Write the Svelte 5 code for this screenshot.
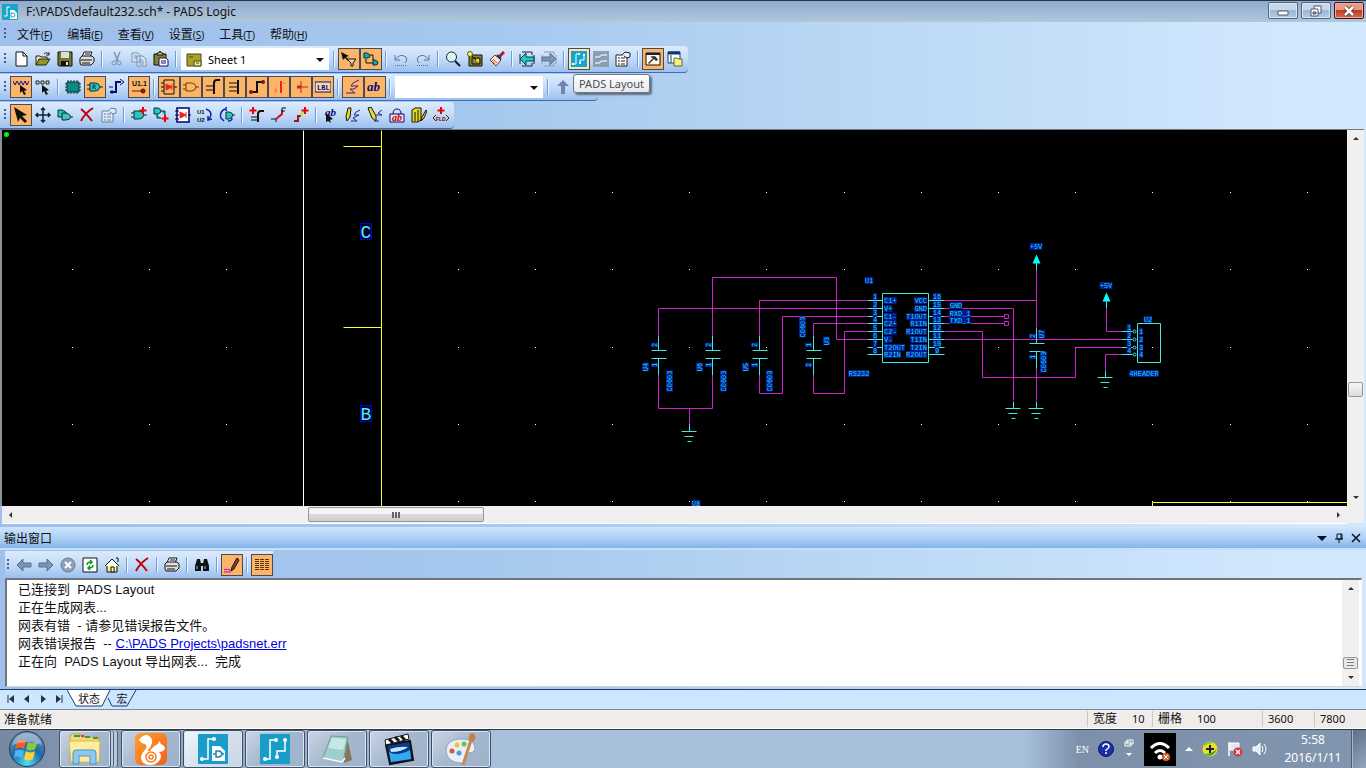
<script lang="ts">
    interface Tool {
        id: string;
        label: string;
        on?: boolean;
        hot?: boolean;
    }

    const menus = [
        { name: '文件', key: 'F' },
        { name: '编辑', key: 'E' },
        { name: '查看', key: 'V' },
        { name: '设置', key: 'S' },
        { name: '工具', key: 'T' },
        { name: '帮助', key: 'H' }
    ];

    // small shapes that several icons share
    const gate = '<path d="M3 4h5q4 0 5 4q-1 4-5 4H3z" fill="#2bc4c4" stroke="#033" /><path d="M0 6h3M0 10h3M13 8h3" stroke="#033"/>';
    const plus = '<path d="M12 0v7M8.500 3.500h7" stroke="#e00" stroke-width="2"/>';
    const printer = '<path d="M5 1h8l-2 5H3z" fill="#fff" stroke="#111"/><path d="M1 7l2-2h10l2 2v4l-3 3H2L1 12z" fill="#ddd" stroke="#111"/><path d="M2 9h11M3 12h8M6 3h5" stroke="#111"/>';
    const cross = '<path d="M2 2q5 4 11 12M14 1Q6 6 2 14" fill="none" stroke="#c00010" stroke-width="2"/>';
    const leftArrow = '<path d="M1 8l6-6v4h8v4H7v4z"';
    const rightArrow = '<path d="M15 8L9 2v4H1v4h8v4z"';

    const icons: Record<string, string> = {
        new: '<path d="M3 1h7l4 4v10H3z" fill="#fff" stroke="#111"/><path d="M10 1v4h4" fill="none" stroke="#111"/>',
        open: '<path d="M1 14V5h4l1 1h6v3" fill="#f4ef9a" stroke="#222"/><path d="M1 14l3-6h11l-4 6z" fill="#98952a" stroke="#222"/><path d="M9 3q3-3 5 1M14 1v3h-3" fill="none" stroke="#222"/>',
        save: '<path d="M1 1h14v14H2l-1-1z" fill="#77772a" stroke="#111"/><path d="M4 1h8v6H4z" fill="#ddd"/><path d="M4 10h8v5H4z" fill="#111"/><path d="M9 11h2v3H9z" fill="#eee"/>',
        print: printer,
        cut: '<path d="M5 1l4 9M11 1L7 10" stroke="#7c93b2" stroke-width="1.5"/><circle cx="5" cy="12" r="2" fill="none" stroke="#7c93b2"/><circle cx="10" cy="12" r="2" fill="none" stroke="#7c93b2"/>',
        copy: '<path d="M1 2h6l2 2v7H1zM6 5h6l3 3v7H6z" fill="#d5e4f7" stroke="#7c93b2"/><path d="M3 5h3M3 7h3M8 9h4M8 11h5M8 13h5" stroke="#7c93b2"/>',
        paste: '<path d="M1 3h12v11H1z" fill="#85812b" stroke="#111"/><path d="M4 4V2h2l1-2 1 2h2v2z" fill="#e6dc58" stroke="#111"/><path d="M6 7h7l2 2v6H6z" fill="#fff" stroke="#116"/><path d="M8 10h5M8 12h5" stroke="#116"/>',
        filter: '<path d="M0 1l8 4-3 1 3 3-1 1-3-3-2 2z" fill="#111"/><path d="M6 8h9l-3 4v3h-2v-3z" fill="#f5d2a0" stroke="#111"/>',
        nets: '<path d="M1 2h3q3 1 3 3t-3 2H1z" fill="#18a8a8" stroke="#033"/><path d="M10 9h2q3 1 3 3t-3 2h-2z" fill="#18a8a8" stroke="#033"/><path d="M7 4h3v5M3 8v4h7" fill="none" stroke="#111"/>',
        undo: '<path d="M2 4v5h5M3 8q4-6 10-2 2 3-1 6" fill="none" stroke="#58739b"/><path d="M2 14.500h12" stroke="#58739b" stroke-dasharray="1 1"/>',
        redo: '<path d="M14 4v5H9M13 8Q9 2 3 6q-2 3 1 6" fill="none" stroke="#58739b"/><path d="M2 14.500h12" stroke="#58739b" stroke-dasharray="1 1"/>',
        zoom: '<circle cx="6.500" cy="6" r="5" fill="#d5fbfb" stroke="#222"/><path d="M10 10l5 5" stroke="#113" stroke-width="2"/>',
        board: '<path d="M2 4h13v11H2z" fill="#8b882b" stroke="#111"/><path d="M5 7h8v6H5z" fill="#8b882b" stroke="#111"/><path d="M8 8h4v4z" fill="#e8e040"/><circle cx="3" cy="3" r="2.500" fill="#ff4" stroke="#552"/><path d="M5 5l4 4" stroke="#111"/>',
        brush: '<path d="M15 1l-5 5" stroke="#a22" stroke-width="3"/><path d="M6 4l6 5-5 6-6-6z" fill="#fbe5cf" stroke="#734"/><path d="M8 4l4 4" stroke="#237" stroke-width="2"/><path d="M4 8l4 4M3 9l3 4" stroke="#c64"/>',
        prev: '<path d="M3 1h10v3M3 15h10v-3M1 3v10M15 4v9" fill="none" stroke="#222"/>' + leftArrow + ' fill="#20c8c8" stroke="#044"/>',
        next: '<path d="M3 1h10v3M3 15h10v-3M1 4v9M15 4v9" fill="none" stroke="#8b9db6"/>' + rightArrow + ' fill="#7f93ae" stroke="#5f738e"/>',
        layout: '<rect width="16" height="16" fill="#15a3cf"/><path d="M2 13h3V3h3M9 12V9h4V4" fill="none" stroke="#fff"/><path d="M1 12h2v2H1zM7 2h2v2H7zM8 11h2v2H8zM12 3h2v2h-2z" fill="#fff"/>',
        route: '<rect width="16" height="16" fill="#8c9db0"/><path d="M2 6h4l3-2h5M2 12h4l3-2h5" fill="none" stroke="#dce6f2" stroke-width="1.500"/>',
        props: '<path d="M1 4h11v11H1z" fill="#fff" stroke="#222"/><path d="M3 7h2M6 7h4M3 10h2M6 10h4M3 13h2M6 13h4" stroke="#222"/><path d="M7 4l3-3 5 1v4l-3 1-3-2" fill="#e8ecf5" stroke="#222"/>',
        outwin: '<path d="M1 2h14v12H1z" fill="#fff8e8" stroke="#111"/><path d="M1 3h14" stroke="#124" stroke-width="2"/><path d="M5 6q4-2 6 0l2 3-2 1-2-2-5 5-1-1 5-5z" fill="#333"/>',
        projwin: '<path d="M1 1h12v11H1z" fill="#fff" stroke="#146"/><path d="M1 2h12" stroke="#137" stroke-width="3"/><path d="M4 4v8" stroke="#146"/><path d="M7 7h3l1 1h4v7H7z" fill="#f5ee80" stroke="#663"/>',
        selany: '<path d="M0 2l2 4 2-4 2 4 2-4 2 4 2-4 2 4 2-4" fill="none" stroke="#0b0b9b"/><path d="M7 6l7 5-3 1 2 3-2 1-2-4-2 2z" fill="#111"/>',
        selparts: '<path d="M1 2h3v3H1zM6 2h3v3H6zM11 2h3v3h-3z" fill="none" stroke="#222"/><path d="M7 6l7 5-3 1 2 3-2 1-2-4-2 2z" fill="#111"/>',
        chip: '<path d="M2 3h12v10H2z" fill="#128787" stroke="#033"/><path d="M3 1v14M6 1v14M9 1v14M12 1v14" stroke="#044" stroke-dasharray="2 10 2"/><path d="M0 5h2M0 8h2M0 11h2M14 5h2M14 8h2M14 11h2" stroke="#033"/>',
        gate: gate + '<path d="M6 6v4M6 6h2v2H6l3 2" fill="none" stroke="#046"/>',
        net: '<path d="M1 13h6V3h5" fill="none" stroke="#0a0a78" stroke-width="2"/><path d="M0 8h4M11 0l4 3-4 3M3 15v-4" fill="none" stroke="#0a0a78"/>',
        refdes: '<text x="1" y="7" font-size="7" font-family="Liberation Sans" font-weight="bold" fill="#111">U1.1</text><path d="M1 12h10" stroke="#711"/><circle cx="12" cy="12" r="2" fill="#a11" stroke="#411"/>',
        parttype: '<path d="M3 1h10v14H3z" fill="none" stroke="#111"/><path d="M0 4h3M0 8h3M0 12h3M13 8h3" stroke="#111"/><path d="M5 5l6 3-6 3zM11 5v6" fill="#e22" stroke="#e22"/>',
        andgate: '<path d="M3 4h6q4 1 4 4t-4 4H3zM0 6h3M0 10h3M13 8h3" fill="none" stroke="#6b3f12"/>',
        bus: '<path d="M15 1h-3Q9 1 9 4v11" fill="none" stroke="#111" stroke-width="2"/><path d="M1 7h8M1 11h8" stroke="#111"/>',
        busend: '<path d="M11 1v14" stroke="#111" stroke-width="2"/><path d="M2 4h8M2 8h8M2 12h8" stroke="#111"/>',
        netline: '<path d="M2 13h6V3h6" fill="none" stroke="#111" stroke-width="2"/><circle cx="2" cy="13" r="2" fill="#811"/><circle cx="14" cy="3" r="2" fill="#811"/>',
        pin: '<path d="M10 2v12" stroke="#e22" stroke-width="2"/><path d="M5 9v5M13 3v2M3 12h2" stroke="#e66"/>',
        tie: '<path d="M8 2v12M8 8h7" stroke="#c22"/><path d="M4 8h4" stroke="#c22" stroke-width="3"/>',
        label: '<path d="M0 3h16v10H0z" fill="#f5d9a8" stroke="#0a0a78"/><text x="2" y="11" font-size="7" font-family="Liberation Mono" font-weight="bold" fill="#0a0a78">LBL</text>',
        line2d: '<path d="M1 14h9L5 10h4l4-3H6l2-3 6-3" fill="none" stroke="#40208a"/>',
        text: '<text x="0" y="12" font-size="13" font-family="Liberation Serif" font-style="italic" font-weight="bold" fill="#08087a">ab</text>',
        up: '<path d="M8 1l6 6h-4v8H6V7H2z" fill="#6d88ac"/>',
        down: '<path d="M8 15l6-6h-4V1H6v8H2z" fill="#6d88ac"/>',
        select: '<path d="M1 0l13 8-5 1 5 5-2 2-5-5-2 4z" fill="#111"/>',
        move: '<path d="M8 1v14M1 8h14M6 3l2-2 2 2M6 13l2 2 2-2M3 6L1 8l2 2M13 6l2 2-2 2" fill="none" stroke="#123" stroke-width="1.500"/>',
        dup: '<path d="M1 3h4q4 1 5 4-1 3-5 3H1z" fill="#2bc4c4" stroke="#033"/><path d="M5 6h4q4 1 5 4-1 3-5 3H5zM14 10h2" fill="#5bb" stroke="#033"/>',
        del: cross,
        props2: '<path d="M1 4h11v11H1z" fill="#dce9f8" stroke="#6a80a0"/><path d="M3 7h2M6 7h4M3 10h2M6 10h4M3 13h2M6 13h4" stroke="#6a80a0"/><path d="M7 4l3-3 5 1v4l-3 1-3-2" fill="#dce9f8" stroke="#6a80a0"/>',
        addpart: gate + plus,
        addconn: '<path d="M1 1h4q3 1 3 3t-3 3H1zM8 4h4v5M4 7v4h4" fill="#2bc4c4" stroke="#033"/><path d="M12 8v7M8.500 11.500h7" stroke="#e00" stroke-width="2"/>',
        hier: '<path d="M2 1h12v14H2z" fill="#fff" stroke="#006" stroke-width="1.500"/><path d="M0 4h4M0 8h4M0 12h4M13 8h3" stroke="#006"/><path d="M5 5l6 3-6 3zM11 5v6" fill="#e22" stroke="#e22"/>',
        swapref: '<text x="0" y="7" font-size="6" font-family="Liberation Sans" font-weight="bold" fill="#111">U1</text><text x="0" y="15" font-size="6" font-family="Liberation Sans" font-weight="bold" fill="#111">U2</text><path d="M9 2q8 3 3 10M11 9l0 4 4-1" fill="none" stroke="#0a2ab0" stroke-width="1.500"/>',
        swappin: '<path d="M7 5h3q4 1 4 3t-4 4H7zM14 8h2" fill="#2bc4c4" stroke="#033"/><path d="M6 2Q0 5 2 11l3 3M7 0v4M9 14q4 0 4-3" fill="none" stroke="#0a2ab0" stroke-width="1.500"/>',
        addbus: '<path d="M15 4h-3Q9 4 9 7v8" fill="none" stroke="#111" stroke-width="2"/><path d="M2 10h7M2 13h6" stroke="#111"/><path d="M4 0v7M.5 3.500h7" stroke="#e00" stroke-width="2"/>',
        splitbus: '<path d="M11 3v4L5 12" fill="none" stroke="#c11" stroke-width="2"/><path d="M15 1h-4v3h3M0 12h5v3" fill="none" stroke="#111"/>',
        extbus: '<path d="M1 14h4V9h3" fill="none" stroke="#a11" stroke-width="2"/><path d="M7 8l5-4" stroke="#dd2" stroke-width="2"/>' + plus,
        addtext: '<text x="2" y="9" font-size="11" font-family="Liberation Serif" font-style="italic" font-weight="bold" fill="#08087a">ab</text><path d="M3 6l7 6-3 1 1 3-3-2-2 1z" fill="#111"/>',
        addline: '<path d="M3 1h3L5 10l-3 4-1-4z" fill="#e8e020" stroke="#111"/><path d="M6 14h6L8 11l6-3H9l2-3 4-2" fill="none" stroke="#2a2a8a"/>',
        modline: '<path d="M1 1l3-1 5 9v5l-4-3z" fill="#e8e020" stroke="#111"/><path d="M7 14h5M9 8h6l-4-2 4-3" fill="none" stroke="#2a2a8a"/>',
        libtext: '<path d="M1 7h14v8H1z" fill="#f8dce8" stroke="#0a0a78"/><path d="M4 7q0-5 4-5t4 5" fill="none" stroke="#0a0a78"/><text x="3" y="14" font-size="10" font-family="Liberation Serif" font-style="italic" font-weight="bold" fill="#b00">ab</text>',
        libsave: '<path d="M1 3l3-2h6v12l-3 2H1z" fill="#e8dc20" stroke="#111"/><path d="M4 5v9M7 3v11" stroke="#111"/><path d="M15 3l-4 7-1 4 3-3 3-7z" fill="#e8dc20" stroke="#111"/>',
        field: '<path d="M8 0v7M4.500 3.500h7" stroke="#e00" stroke-width="2"/><path d="M3 8l-3 3 3 3M13 8l3 3-3 3" fill="none" stroke="#611"/><text x="3" y="14" font-size="5" font-family="Liberation Sans" font-weight="bold" fill="#611">FLD</text>',
        back: leftArrow + ' fill="#7c93b4" stroke="#5a7090"/>',
        fwd: rightArrow + ' fill="#7c93b4" stroke="#5a7090"/>',
        stop: '<circle cx="8" cy="8" r="7" fill="#8fa1b8" stroke="#66788f"/><path d="M5 5l6 6M11 5l-6 6" stroke="#fff" stroke-width="2"/>',
        refresh: '<path d="M1 1h14v14H1z" fill="#fff" stroke="#111"/><path d="M5 8q0-3 4-3M8 3l2 2-2 2M11 8q0 3-4 3M8 9l-2 2 2 2" fill="none" stroke="#0a9a1a" stroke-width="1.500"/>',
        home: '<path d="M3 8h10v7H3z" fill="#fbf27a" stroke="#111"/><path d="M1 9l7-7 7 7" fill="#fff" stroke="#111"/><path d="M12 1h2v4" fill="none" stroke="#111"/><path d="M7 10h3v5H7z" fill="#fff" stroke="#111"/>',
        find: '<path d="M3 2h3l1 5v7H1V9zM10 2h3l2 7v5H9V7z" fill="#111"/><path d="M6 6h4v3H6z" fill="#111"/><path d="M3 9v3M11 9v3" stroke="#abc"/>',
        record: '<path d="M13 1l2 2-5 9-3 2 1-4z" fill="#843" stroke="#111"/><path d="M0 13l2-1 1 1 2-1 1 2" fill="none" stroke="#d0c"/><path d="M0 15h7" stroke="#d0c"/>',
        list: '<path d="M1 2.500h14M1 4.500h14M1 6.500h14M1 8.500h14M1 10.500h14M1 12.500h14" stroke="#5a3208" stroke-dasharray="4 1"/>'
    };

    const t = (id: string, label: string, on = false): Tool => ({ id, label, on });

    // a separator stands between the inner lists
    const standard1 = [
        [t('new', 'New'), t('open', 'Open'), t('save', 'Save'), t('print', 'Print')],
        [t('cut', 'Cut'), t('copy', 'Copy'), t('paste', 'Paste')]
    ];
    const standard2 = [
        [t('filter', 'Selection filter', true), t('nets', 'Nets', true)],
        [t('undo', 'Undo'), t('redo', 'Redo')],
        [t('zoom', 'Zoom'), t('board', 'Board'), t('brush', 'Redraw')],
        [t('prev', 'Previous view'), t('next', 'Next view')],
        [{ id: 'layout', label: 'PADS Layout', hot: true }, t('route', 'PADS Router'), t('props', 'Properties')],
        [t('outwin', 'Output window', true), t('projwin', 'Project explorer')]
    ];
    const filter1 = [
        [t('selany', 'Anything', true), t('selparts', 'Nothing')],
        [t('chip', 'Parts'), t('gate', 'Gates', true), t('net', 'Nets'), t('refdes', 'Pins', true)],
        [t('parttype', 'Hierarchical', true), t('andgate', 'Gate outline', true), t('bus', 'Bus', true), t('busend', 'Bus segment', true),
         t('netline', 'Connection', true), t('pin', 'Pin', true), t('tie', 'Tie dot', true), t('label', 'Label', true)],
        [t('line2d', '2D line', true), t('text', 'Text', true)]
    ];
    const design = [
        [t('select', 'Select', true), t('move', 'Move'), t('dup', 'Duplicate'), t('del', 'Delete'), t('props2', 'Properties')],
        [t('addpart', 'Add part'), t('addconn', 'Add connection'), t('hier', 'Hierarchical symbol'), t('swapref', 'Swap reference'), t('swappin', 'Swap pins')],
        [t('addbus', 'Add bus'), t('splitbus', 'Split bus'), t('extbus', 'Extend bus')],
        [t('addtext', 'Add text'), t('addline', 'Add line'), t('modline', 'Modify line'), t('libtext', 'Library text'), t('libsave', 'Save to library'), t('field', 'Add field')]
    ];
    const outputTools = [
        [t('back', 'Back'), t('fwd', 'Forward'), t('stop', 'Stop'), t('refresh', 'Refresh'), t('home', 'Home')],
        [t('del', 'Clear')],
        [t('print', 'Print log')],
        [t('find', 'Find')],
        [t('record', 'Record', true)],
        [t('list', 'List', true)]
    ];

    // schematic data
    const gridX = [72, 149, 226, 458, 535, 612, 689, 766, 844, 921, 998, 1075, 1152, 1230, 1307];
    const gridY = [192, 269, 347, 424, 501];
    const wires = [
        'M658 335V308H867', 'M712 335V277H836V339H867', 'M759 335V300H867', 'M759 375V393H782V316H867',
        'M813 335V323H867', 'M813 375V393H844V331H867', 'M658 375V408H712V375', 'M689 408V424',
        'M944 300H1036', 'M944 308H1013V400', 'M944 316H1004', 'M944 323H1004',
        'M944 331H982V377H1075V347H1121', 'M944 339H1121', 'M1036 270V330', 'M1036 366V400',
        'M1106 308V331H1121', 'M1121 354H1105V370', 'M1004 314h4v4h-4z', 'M1004 321h4v4h-4z'
    ];
    const caps = [
        { x: 658, y: 350 }, { x: 712, y: 350 }, { x: 759, y: 350 }, { x: 813, y: 350 }, { x: 1036, y: 343 }
    ];
    const grounds = [{ x: 689, y: 431 }, { x: 1013, y: 408 }, { x: 1036, y: 408 }, { x: 1105, y: 377 }];
    const powers = [{ x: 1036, y: 254 }, { x: 1106, y: 292 }];
    const pinY = [300, 308, 316, 323, 331, 339, 347, 354];
    const leftPins = ['C1+', 'V+', 'C1-', 'C2+', 'C2-', 'V-', 'T2OUT', 'R2IN'];
    const rightPins = ['VCC', 'GND', 'T1OUT', 'R1IN', 'R1OUT', 'T1IN', 'T2IN', 'R2OUT'];
    const headerY = [331, 339, 347, 354];

    // [text, centre x, centre y, upright]
    const labels: [string, number, number, boolean][] = [
        ['U1', 869, 281, false], ['RS232', 859, 374, false], ['GND', 956, 306, false],
        ['RXD_1', 960, 314, false], ['TXD_1', 960, 321, false],
        ['+5V', 1036, 247, false], ['+5V', 1106, 286, false],
        ['U2', 1148, 320, false], ['4HEADER', 1144, 374, false], ['U8', 696, 504, false],
        ['2', 655, 345, true], ['1', 655, 365, true], ['U4', 646, 367, true], ['C0603', 670, 381, true],
        ['2', 709, 345, true], ['1', 709, 365, true], ['U6', 700, 367, true], ['C0603', 724, 381, true],
        ['2', 755, 345, true], ['1', 755, 365, true], ['U5', 746, 367, true], ['C0603', 770, 381, true],
        ['1', 809, 345, true], ['2', 809, 365, true], ['U3', 827, 341, true], ['C0603', 803, 327, true],
        ['2', 1033, 336, true], ['1', 1033, 357, true], ['U7', 1042, 334, true], ['C0603', 1044, 362, true]
    ];

    const status = [
        { name: '宽度', value: '10' },
        { name: '栅格', value: '100' }
    ];

    let sheet = $state('Sheet 1');
    let activeTab = $state('状态');
</script>

{#snippet icon(id: string)}
    <svg class="icon" viewBox="0 0 16 16" fill="none" aria-hidden="true">{@html icons[id]}</svg>
{/snippet}

{#snippet toolGroups(groups: Tool[][], trailing: boolean)}
    {#each groups as group, i}
        {#each group as tool}
            <div class="tool-wrap">
                <button class="tool" class:on={tool.on} class:hot={tool.hot} aria-label={tool.label}>{@render icon(tool.id)}</button>
                {#if tool.hot}
                    <div class="tooltip">{tool.label}</div>
                {/if}
            </div>
        {/each}
        {#if trailing || i < groups.length - 1}
            <i class="sep"></i>
        {/if}
    {/each}
{/snippet}

{#snippet mark(text: string, x: number, y: number, upright: boolean)}
    <g transform={`translate(${x} ${y})${upright ? ' rotate(-90)' : ''}`}>
        <rect x={-text.length * 2.1} y="-4" width={text.length * 4.2} height="7" fill="#001e90" />
        <text y="2" text-anchor="middle">{text}</text>
    </g>
{/snippet}

<div class="app">
    <header class="titlebar">
        <svg class="logo" viewBox="0 0 16 16">
            <rect width="16" height="16" rx="1" fill="#18a5cc" />
            <path d="M2 12h3V3h3" fill="none" stroke="#fff" />
            <path d="M8 6h4l3 3v6H8z" fill="#fff" />
            <path d="M9 9h2q2 0 2 2t-2 2H9z" fill="none" stroke="#18a5cc" />
        </svg>
        <h1>F:\PADS\default232.sch* - PADS Logic</h1>
        <div class="win-buttons">
            <button aria-label="Minimize">
                <svg viewBox="0 0 14 12"><path d="M2 6h10v4H2z" fill="#fff" stroke="#4b5b70" /></svg>
            </button>
            <button aria-label="Restore">
                <svg viewBox="0 0 14 12"><path d="M5 1h7v7H5z" fill="#fff" stroke="#4b5b70" /><path d="M2 4h7v7H2z" fill="#fff" stroke="#4b5b70" /><path d="M4 7h3v2H4z" fill="#8ca4c2" stroke="#4b5b70" /></svg>
            </button>
            <button class="close" aria-label="Close">
                <svg viewBox="0 0 14 12"><path d="M3 2l8 8M11 2l-8 8" stroke="#5b2a2a" stroke-width="4" /><path d="M3 2l8 8M11 2l-8 8" stroke="#fff" stroke-width="2.500" /></svg>
            </button>
        </div>
    </header>

    <nav class="menubar">
        <i class="grip"></i>
        {#each menus as menu}
            <button>{menu.name}<span>(<u>{menu.key}</u>)</span></button>
        {/each}
    </nav>

    <div class="toolbar">
        <i class="grip"></i>
        {@render toolGroups(standard1, true)}
        <div class="combo">
            <svg class="icon" viewBox="0 0 16 16"><path d="M1 3h14v12H1z" fill="#a9a321" stroke="#443" /><path d="M8 10h7v5H8z" fill="#f0ea80" stroke="#443" /><path d="M3 6h4M10 12h3" stroke="#443" /></svg>
            <select aria-label="Sheet" bind:value={sheet}>
                <option>Sheet 1</option>
            </select>
            <i class="arrow"></i>
        </div>
        <i class="sep"></i>
        {@render toolGroups(standard2, false)}
    </div>
    <div class="toolbar">
        <i class="grip"></i>
        {@render toolGroups(filter1, true)}
        <div class="combo">
            <input type="text" aria-label="Search" />
            <i class="arrow"></i>
        </div>
        <i class="sep"></i>
        {@render toolGroups([[t('up', 'Up'), t('down', 'Down')]], false)}
    </div>
    <div class="toolbar last">
        <i class="grip"></i>
        {@render toolGroups(design, false)}
    </div>

    <main class="workspace">
        <svg class="sheet">
            <g transform="translate(-2 -130)">
                <g fill="#fff">
                    {#each gridX as x}
                        {#each gridY as y}
                            <rect {x} {y} width="1" height="1" />
                        {/each}
                    {/each}
                </g>
                <circle cx="6.500" cy="134.500" r="2.500" fill="#0f0" />
                <g transform="translate(.5 .5)" fill="none" stroke-width="1">
                    <path d="M303 130V520" stroke="#fff" />
                    <path d="M381 130V520M343 146H381M343 327H381M1152 507V502H1400" stroke="#ffff30" />
                    <path d={wires.join('')} stroke="#d020d0" />
                    <g stroke="#40e8e0">
                        {#each caps as c}
                            <path d={`M${c.x} ${c.y - 15}v15m-7 0h15m-15 8h15m-8 0v17`} />
                        {/each}
                        {#each grounds as g}
                            <path d={`M${g.x} ${g.y - 7}v7m-8 0h15m-12 5h9m-6 5h4`} />
                        {/each}
                        {#each powers as p}
                            <path d={`M${p.x} ${p.y + 8}v8`} />
                            <path d={`M${p.x} ${p.y}l4 9h-8z`} fill="#00ffff" stroke="none" />
                        {/each}
                        <path d="M882 293h46v69h-46z" />
                        {#each pinY as y}
                            <path d={`M867 ${y}h15m46 0h16`} />
                        {/each}
                        <path d="M1137 323h23v39h-23z" />
                        {#each headerY as y}
                            <path d={`M1121 ${y}h11`} />
                            <circle cx="1134" cy={y} r="1.500" />
                        {/each}
                    </g>
                </g>
                <g class="marks">
                    {#each pinY as y, i}
                        {@render mark(String(i + 1), 875, y - 3, false)}
                        {@render mark(String(16 - i), 937, y - 3, false)}
                        {@render mark(leftPins[i], 884 + leftPins[i].length * 2.1, y + 1, false)}
                        {@render mark(rightPins[i], 927 - rightPins[i].length * 2.1, y + 1, false)}
                    {/each}
                    {#each headerY as y, i}
                        {@render mark(String(i + 1), 1129, y - 3, false)}
                        {@render mark(String(i + 1), 1141, y + 1, false)}
                    {/each}
                    {#each labels as [text, x, y, upright]}
                        {@render mark(text, x, y, upright)}
                    {/each}
                </g>
                <g class="zones">
                    <rect x="360.500" y="223.500" width="11" height="16" />
                    <text x="366" y="238">C</text>
                    <rect x="360.500" y="405.500" width="11" height="16" />
                    <text x="366" y="420">B</text>
                </g>
            </g>
        </svg>
        <div class="vscroll">
            <button class="sb up" aria-label="Scroll up"></button>
            <i class="space-a"></i>
            <i class="thumb"></i>
            <i class="space-b"></i>
            <button class="sb down" aria-label="Scroll down"></button>
        </div>
    </main>
    <div class="hscroll">
        <button class="sb left" aria-label="Scroll left"></button>
        <i class="space-a"></i>
        <i class="thumb"><b></b></i>
        <i class="space-b"></i>
        <button class="sb right" aria-label="Scroll right"></button>
    </div>

    <section class="output">
        <div class="pane-title">
            <h2>输出窗口</h2>
            <button aria-label="Menu"><svg viewBox="0 0 10 10"><path d="M0 3h10L5 8z" fill="#012" /></svg></button>
            <button aria-label="Pin"><svg viewBox="0 0 10 10"><path d="M3 1h5v5H3zM1 6h8M5 6v4M7 1v5" fill="none" stroke="#012" /></svg></button>
            <button aria-label="Close pane"><svg viewBox="0 0 10 10"><path d="M1 1l8 8M9 1L1 9" stroke="#012" stroke-width="1.500" /></svg></button>
        </div>
        <div class="pane-tools">
            <i class="grip"></i>
            {@render toolGroups(outputTools, false)}
        </div>
        <div class="log">
            <div class="lines">
                <p>已连接到&nbsp; PADS Layout</p>
                <p>正在生成网表...</p>
                <p>网表有错&nbsp; - 请参见错误报告文件。</p>
                <p>网表错误报告&nbsp; -- <a href="#err">C:\PADS Projects\padsnet.err</a></p>
                <p>正在向&nbsp; PADS Layout 导出网表...&nbsp; 完成</p>
            </div>
            <div class="vscroll">
                <button class="sb up" aria-label="Scroll log up"></button>
                <i class="space-a"></i>
                <i class="thumb lined"></i>
                <button class="sb down" aria-label="Scroll log down"></button>
            </div>
        </div>
    </section>

    <div class="tabs">
        <button class="nav" aria-label="First tab"><svg viewBox="0 0 10 10"><path d="M2 1v8" stroke="#234" /><path d="M8 1v8L3 5z" fill="#234" /></svg></button>
        <button class="nav" aria-label="Previous tab"><svg viewBox="0 0 10 10"><path d="M7 1v8L2 5z" fill="#234" /></svg></button>
        <button class="nav" aria-label="Next tab"><svg viewBox="0 0 10 10"><path d="M3 1v8l5-4z" fill="#234" /></svg></button>
        <button class="nav" aria-label="Last tab"><svg viewBox="0 0 10 10"><path d="M8 1v8" stroke="#234" /><path d="M2 1v8l5-4z" fill="#234" /></svg></button>
        <button class="tab" class:active={activeTab === '状态'} onclick={() => activeTab = '状态'}>
            <svg viewBox="0 0 44 17" preserveAspectRatio="none"><path d="M0 0L9 16H35L43 0" /></svg>
            <span>状态</span>
        </button>
        <button class="tab second" class:active={activeTab === '宏'} onclick={() => activeTab = '宏'}>
            <svg viewBox="0 0 30 17" preserveAspectRatio="none"><path d="M1 8L5 16H20L29 0" /></svg>
            <span>宏</span>
        </button>
    </div>

    <footer class="status">
        <span class="ready">准备就绪</span>
        {#each status as s}
            <span class="cell pair"><span>{s.name}</span><span>{s.value}</span></span>
        {/each}
        <span class="cell">3600</span>
        <span class="cell">7800</span>
    </footer>

    <div class="taskbar">
        <button class="start" aria-label="Start">
            <svg viewBox="0 0 38 38">
                <defs>
                    <radialGradient id="orb" cx=".5" cy=".9" r=".9">
                        <stop offset="0" stop-color="#4fe0f5" /><stop offset=".5" stop-color="#1b6aa8" /><stop offset="1" stop-color="#7b97b5" />
                    </radialGradient>
                </defs>
                <circle cx="19" cy="19" r="17.500" fill="url(#orb)" stroke="#1d3c60" />
                <path d="M9 11q5-3 9 0l-2 8q-4-3-9 0z" fill="#f0602a" />
                <path d="M20 12q5 3 10-1l-3 8q-4 3-9 0z" fill="#8cc63f" />
                <path d="M7 21q4-3 9 0l-2 7q-4-3-8 0z" fill="#4fb4f0" />
                <path d="M18 21q4 3 9 0l-2 8q-5 3-9 0z" fill="#ffd23a" />
                <path d="M4 15Q8 3 19 3t15 12q-14-6-30 0z" fill="#fff" opacity=".35" />
            </svg>
        </button>
        <button class="task stacked" aria-label="Explorer">
            <svg viewBox="0 0 36 36">
                <path d="M3 6l2-3h8l2 3h17v24H3z" fill="#f3d97a" stroke="#c9a23c" />
                <path d="M7 5h6M18 6h5M26 7h5" stroke="#3a9a4a" stroke-width="2" />
                <path d="M14 5h3" stroke="#d33" stroke-width="2" />
                <path d="M2 10h31l-1 21H4z" fill="#fbeea0" stroke="#d9b850" />
                <path d="M6 33V22q0-3 3-3h17q3 0 3 3v11h-6v-8H12v8z" fill="#8fc8ef" stroke="#4a90c8" />
            </svg>
        </button>
        <button class="task" aria-label="UC Browser">
            <svg viewBox="0 0 36 36">
                <defs><linearGradient id="uc" x1="0" y1="0" x2="1" y2="1"><stop offset="0" stop-color="#ffa02a" /><stop offset="1" stop-color="#f2601a" /></linearGradient></defs>
                <rect x="2" y="2" width="32" height="32" rx="6" fill="url(#uc)" />
                <path d="M6 9q3-5 8-5 6 2 5 8-1 4-4 7 0 2 2 1 3-5 8-7l1-3 2 3q4 2 4 5-2 3-6 3 4 4 0 9-3 4-9 4-8 0-9-7 0-4 4-8 3-4 0-6-3 0-6-4z" fill="#fff" />
                <circle cx="18" cy="26" r="5" fill="none" stroke="#f57b22" stroke-width="1.500" />
                <circle cx="18" cy="26" r="2" fill="none" stroke="#f57b22" stroke-width="1.500" />
            </svg>
        </button>
        <button class="task current" aria-label="PADS Logic">
            <svg viewBox="0 0 36 36">
                <rect x="3" y="3" width="30" height="30" rx="1" fill="#1a9cc8" />
                <path d="M7 28h6V8h6" fill="none" stroke="#fff" stroke-width="1.500" />
                <circle cx="7" cy="28" r="2" fill="#fff" /><circle cx="19" cy="8" r="2" fill="#fff" />
                <path d="M17 15h8l5 5v10H17z" fill="#fff" />
                <path d="M21 20h3q3 1 3 3t-3 3h-3zM18 23h3M27 23h2" fill="none" stroke="#1a86ae" stroke-width="1.500" />
            </svg>
        </button>
        <button class="task" aria-label="PADS Layout window">
            <svg viewBox="0 0 36 36">
                <rect x="3" y="3" width="30" height="30" rx="1" fill="#1a9cc8" />
                <path d="M8 28h5V9h6M20 26v-6h8V9" fill="none" stroke="#fff" stroke-width="1.500" />
                <circle cx="8" cy="28" r="2" fill="#fff" /><circle cx="19" cy="9" r="2" fill="#fff" />
                <circle cx="20" cy="26" r="2" fill="#fff" /><circle cx="28" cy="9" r="2" fill="#fff" />
            </svg>
        </button>
        <button class="task" aria-label="Notepad">
            <svg viewBox="0 0 36 36">
                <path d="M28 6l5 23-8 3z" fill="#8a7456" />
                <path d="M12 5l17 1-5 25-20-4z" fill="#9ccfce" stroke="#6c9c9e" />
                <path d="M13 7l14 1-3 11-15-2z" fill="#c5e8e5" />
                <path d="M4 27l19 4 3-4" fill="none" stroke="#fff" stroke-width="1.500" />
            </svg>
        </button>
        <button class="task" aria-label="Video">
            <svg viewBox="0 0 36 36">
                <path d="M5 14l24-4 3 19-23 4z" fill="#0a3a8c" stroke="#111" stroke-width="2" />
                <path d="M8 21q8 5 21-2l1 9-20 3z" fill="#35a9f0" />
                <path d="M9 18q9-3 18-2-6 5-17 5z" fill="#bfe6ff" />
                <path d="M4 9L27 3l1 5-23 6z" fill="#fff" stroke="#111" />
                <path d="M8 8l4 4M14 6l4 4M20 5l4 4" stroke="#111" stroke-width="3" />
            </svg>
        </button>
        <button class="task" aria-label="Paint">
            <svg viewBox="0 0 36 36">
                <path d="M3 20Q3 9 16 8q15-1 16 9 0 5-7 5-4 1-2 5 1 5-6 5Q4 31 3 20z" fill="#e8eef5" stroke="#8fa3b8" />
                <circle cx="9" cy="20" r="2.500" fill="#e0503a" /><circle cx="14" cy="14" r="2.500" fill="#f0c23a" />
                <circle cx="21" cy="13" r="2.500" fill="#6cbf4a" /><circle cx="16" cy="22" r="2.500" fill="#4a9be0" />
                <path d="M28 9l-8 25" stroke="#c98a52" stroke-width="3" />
                <path d="M26 9q-1-7 4-7 5 4 0 9z" fill="#c77f4a" />
            </svg>
        </button>
        <div class="tray">
            <span class="lang">EN</span>
            <svg class="help" viewBox="0 0 16 16"><circle cx="8" cy="8" r="7.500" fill="#1a2fa8" stroke="#0b1a60" /><path d="M5 6q0-3 3-3t3 3q0 1-3 3v1M8 11v2" fill="none" stroke="#fff" stroke-width="1.500" /></svg>
            <svg class="ime" viewBox="0 0 12 20"><path d="M4 1h6v4H4zM2 3h6v4H2z" fill="#7d8fa8" stroke="#fff" /><path d="M3 14h6l-3 3z" fill="#fff" /></svg>
            <svg class="wifi" viewBox="0 0 32 33">
                <rect width="32" height="33" />
                <path d="M7 15q9-9 18 0M11 20q5-5 10 0" fill="none" stroke="#fff" stroke-width="3" />
                <circle cx="16" cy="24" r="2.500" fill="#fff" />
                <circle cx="22" cy="24" r="4" fill="#e0603a" /><path d="M20 22l4 4M24 22l-4 4" stroke="#fff" />
            </svg>
            <svg class="chev" viewBox="0 0 8 8"><path d="M0 6h8L4 2z" fill="#fff" /></svg>
            <svg class="help" viewBox="0 0 16 16"><circle cx="8" cy="8" r="7.500" fill="#f0dc20" /><path d="M2 13q9 5 13-5-5 5-13 5z" fill="#3aa83a" /><path d="M1 6q3-7 11-4-7 0-11 4z" fill="#6cc83a" /><path d="M8 4v8M4 8h8" stroke="#123" stroke-width="2" /></svg>
            <svg class="help" viewBox="0 0 16 16"><path d="M2 1v14" stroke="#fff" stroke-width="1.500" /><path d="M3 2h9v7H3z" fill="#dfe6ef" stroke="#fff" /><circle cx="11" cy="11" r="4.500" fill="#d8323a" /><path d="M9 9l4 4M13 9l-4 4" stroke="#fff" stroke-width="1.500" /></svg>
            <svg class="help" viewBox="0 0 16 16"><path d="M1 6h3l4-4v12l-4-4H1z" fill="#e8eef5" stroke="#fff" /><path d="M10 5q2 3 0 6M12 3q4 5 0 10" fill="none" stroke="#fff" /></svg>
            <div class="clock"><span>5:58</span><span>2016/1/11</span></div>
            <button class="peek" aria-label="Show desktop"></button>
        </div>
    </div>
</div>

<style>
    :global(body) {
        background: #a6c5ee;
    }

    .app {
        display: flex;
        flex-direction: column;
        height: 100vh;
        overflow: hidden;
        background: linear-gradient(90deg, #9fbfec, #a5c8ee 35%, #b8d6f4 60%, #d2e8fe 95%);
        font-family: "Noto Sans", "Noto Sans CJK SC", sans-serif;
        font-size: 12px;
        color: #111;
    }

    button {
        font: inherit;
        color: inherit;
        border: 0;
        padding: 0;
        background: none;
    }

    h1, h2, p {
        margin: 0;
        font-size: 12px;
        font-weight: normal;
    }

    svg {
        display: block;
        flex: none;
    }

    .titlebar {
        display: flex;
        align-items: center;
        height: 22px;
        box-sizing: border-box;
        padding: 0 2px;
        gap: 8px;
        flex: none;
        border-top: 1px solid #24384f;
        background: linear-gradient(#92aaca, #9db6d3 40%, #b0c8da);
    }

    .titlebar h1 {
        flex: 1;
    }

    .logo {
        width: 16px;
        height: 16px;
    }

    .win-buttons {
        display: flex;
        gap: 3px;
        align-self: flex-start;
        padding-top: 1px;
    }

    .win-buttons button {
        display: flex;
        align-items: center;
        justify-content: center;
        width: 30px;
        height: 17px;
        box-sizing: border-box;
        border: 1px solid #52677f;
        border-radius: 2px;
        background: linear-gradient(#c7d7ea 45%, #9fb6d0 50%, #b6cce2);
        box-shadow: inset 0 0 0 1px #dbe6f2;
    }

    .win-buttons .close {
        border-color: #431220;
        background: linear-gradient(#e59b88 45%, #c13c24 50%, #d8694a);
        box-shadow: inset 0 0 0 1px #eab0a2;
    }

    .win-buttons svg {
        width: 14px;
        height: 12px;
    }

    .menubar {
        display: flex;
        align-items: center;
        gap: 15px;
        height: 24px;
        flex: none;
        padding-left: 4px;
    }

    .menubar .grip {
        margin-right: -4px;
    }

    .menubar span {
        font-size: 10px;
    }

    .grip {
        flex: none;
        width: 2px;
        height: 12px;
        background: repeating-linear-gradient(#3f5f9a 0 2px, transparent 2px 4px);
    }

    .toolbar, .pane-tools {
        display: flex;
        align-items: center;
        align-self: flex-start;
        flex: none;
        box-sizing: border-box;
        background: linear-gradient(#dcebfd, #c3dbf8 50%, #9bc0ee);
    }

    .toolbar {
        height: 27px;
        margin-bottom: 1px;
        padding: 0 2px 0 4px;
        border-bottom: 1px solid #4169b8;
        border-radius: 0 4px 4px 0;
    }

    .toolbar.last {
        margin-bottom: 0;
    }

    .toolbar .grip {
        margin-right: 4px;
    }

    .tool-wrap {
        position: relative;
    }

    .tool {
        display: flex;
        align-items: center;
        justify-content: center;
        width: 22px;
        height: 22px;
        box-sizing: border-box;
    }

    .tool.on {
        border: 1px solid #4b4a55;
        background: #fcb466;
    }

    .tool.hot {
        border: 1px solid #4b4a55;
        background: #f9e6a8;
    }

    .icon {
        width: 16px;
        height: 16px;
    }

    .sep {
        flex: none;
        width: 1px;
        height: 16px;
        margin: 0 4px 0 3px;
        background: #6f9be0;
        box-shadow: 1px 0 #eef6ff;
    }

    .tooltip {
        position: absolute;
        z-index: 5;
        left: 5px;
        top: 26px;
        padding: 0 5px;
        font-size: 11px;
        line-height: 17px;
        white-space: nowrap;
        color: #4c4c4c;
        border: 1px solid #767676;
        border-radius: 3px;
        background: linear-gradient(#fff, #e6e8f2);
        box-shadow: 2px 2px 2px #0007;
    }

    .combo {
        display: flex;
        align-items: center;
        position: relative;
        width: 148px;
        height: 22px;
        margin: 0 1px;
        background: #fff;
    }

    .combo .icon {
        margin: 0 6px 0 5px;
    }

    .combo select, .combo input {
        flex: 1;
        min-width: 0;
        height: 22px;
        padding: 0;
        border: 0;
        outline: 0;
        appearance: none;
        background: transparent;
        font: inherit;
        font-size: 11px;
    }

    .combo .arrow {
        position: absolute;
        right: 5px;
        top: 10px;
        border: 4px solid transparent;
        border-top-color: #111;
        border-bottom: 0;
        pointer-events: none;
    }

    .workspace {
        display: flex;
        flex: 1;
        min-height: 0;
        margin-right: 2px;
        border-top: 1px solid #777;
        border-left: 2px solid #8b939c;
        background: #000;
    }

    .sheet {
        flex: 1;
        width: 0;
        height: 100%;
        overflow: hidden;
    }

    .marks {
        font: 7px "Liberation Mono", monospace;
        fill: #22d6f8;
    }

    .zones {
        font: 18px "Liberation Mono", monospace;
        fill: #4ff0e8;
        text-anchor: middle;
    }

    .zones rect {
        fill: #000030;
        stroke: #0000d8;
    }

    .vscroll {
        display: flex;
        flex-direction: column;
        align-items: center;
        width: 17px;
        flex: none;
        background: #f0f0f0;
    }

    .hscroll {
        display: flex;
        align-items: center;
        height: 17px;
        flex: none;
        margin: 0 19px 0 2px;
        background: #f0eeee;
        box-shadow: 17px 0 #f0eeee, 0 1px #fff;
    }

    .sb {
        display: flex;
        align-items: center;
        justify-content: center;
        width: 17px;
        height: 17px;
        flex: none;
    }

    .sb::before {
        content: "";
        border: 3px solid transparent;
    }

    .sb.up::before {
        border-bottom-color: #333;
        border-top: 0;
    }

    .sb.down::before {
        border-top-color: #333;
        border-bottom: 0;
    }

    .sb.left::before {
        border-right-color: #333;
        border-left: 0;
    }

    .sb.right::before {
        border-left-color: #333;
        border-right: 0;
    }

    .thumb {
        box-sizing: border-box;
        flex: none;
        width: 15px;
        height: 15px;
        border: 1px solid #979797;
        border-radius: 2px;
        background: linear-gradient(#f6f6f6, #dcdcdc);
    }

    .vscroll .space-a {
        flex: 235;
    }

    .vscroll .space-b {
        flex: 92;
    }

    .hscroll .thumb {
        display: flex;
        align-items: center;
        justify-content: center;
        width: 176px;
        background: linear-gradient(#f4f4f4 45%, #dadada 50%, #cfcfcf);
    }

    .hscroll .thumb b {
        width: 8px;
        height: 6px;
        background: repeating-linear-gradient(90deg, #666 0 2px, transparent 2px 3px);
    }

    .hscroll .space-a {
        flex: 289;
    }

    .hscroll .space-b {
        flex: 846;
    }

    .thumb.lined {
        height: 12px;
        background: repeating-linear-gradient(#777 0 1px, #eee 1px 3px) center / 7px 8px no-repeat #e6e6e6;
    }

    .output {
        display: flex;
        flex-direction: column;
        flex: none;
        margin-top: 4px;
    }

    .pane-title {
        display: flex;
        align-items: center;
        height: 21px;
        gap: 7px;
        padding: 0 5px 0 4px;
        background: linear-gradient(#cfe5fc, #a9cdf5 60%, #83b4e8);
        border-bottom: 2px solid #c4e0fc;
    }

    .pane-title h2 {
        flex: 1;
    }

    .pane-title svg, .nav svg {
        width: 10px;
        height: 10px;
    }

    .pane-tools {
        height: 27px;
        margin: 1px 0 0 5px;
        padding-left: 2px;
    }

    .pane-tools .grip {
        margin-right: 4px;
    }

    .log {
        display: flex;
        height: 106px;
        margin: 0 4px 0 5px;
        border: 2px solid #70757b;
        border-right: 1px solid #fff;
        border-bottom: 1px solid #d5d5d5;
        background: #fff;
    }

    .log .vscroll {
        margin-right: 2px;
    }

    .lines {
        flex: 1;
        padding: 1px 0 0 11px;
        font-family: "Liberation Sans", "Noto Sans CJK SC", sans-serif;
    }

    .lines p {
        font-size: 13px;
        line-height: 18px;
    }

    .lines a {
        color: #0000e0;
    }

    .tabs {
        display: flex;
        flex: none;
        height: 19px;
        margin-top: 2px;
        padding-left: 3px;
        border-top: 1px solid #1b3a6b;
        border-bottom: 1px solid #7a8ca0;
        background: #cce6ff;
    }

    .nav {
        display: flex;
        align-items: center;
        justify-content: center;
        width: 16px;
        height: 18px;
    }

    .tab {
        position: relative;
        width: 44px;
        height: 17px;
    }

    .tab.second {
        width: 30px;
        margin-left: -4px;
    }

    .tab svg {
        position: absolute;
        inset: 0;
        width: 100%;
        height: 100%;
        fill: none;
        stroke: #1b3a6b;
    }

    .tab.active svg {
        fill: #fff;
    }

    .tab span {
        position: relative;
        display: block;
        font-size: 11px;
        line-height: 14px;
    }

    .status {
        display: flex;
        align-items: center;
        height: 18px;
        flex: none;
        padding-left: 4px;
        background: #f0ecea;
        border-bottom: 1px solid #fff;
    }

    .ready {
        flex: 1;
    }

    .cell {
        box-sizing: border-box;
        width: 52px;
        padding-left: 5px;
        border-left: 1px solid #c8c8c8;
        line-height: 16px;
        font-size: 11px;
    }

    .cell.pair {
        display: flex;
        gap: 15px;
        width: 65px;
    }

    .cell.pair span:first-child {
        font-size: 12px;
    }

    .cell.pair + .cell.pair {
        width: 110px;
    }

    .taskbar {
        display: flex;
        height: 39px;
        flex: none;
        box-sizing: border-box;
        border-top: 1px solid #2c3c50;
        background: linear-gradient(90deg, #7688a0, #8fa3bd 10%, #a8c0dc 36%, #a8c0dc 75%, #7e90a9 79%, #8295ae);
    }

    .start {
        width: 58px;
        padding-left: 8px;
    }

    .start svg {
        width: 38px;
        height: 38px;
    }

    .task {
        display: flex;
        align-items: center;
        justify-content: center;
        box-sizing: border-box;
        width: 60px;
        height: 38px;
        margin: 0 1px;
        border: 1px solid #3e5068;
        border-radius: 3px;
        background: linear-gradient(135deg, #c9d5e4, #a5b7cd 50%, #9db2cb);
        box-shadow: inset 0 0 0 1px #dce6f2;
    }

    .task.stacked {
        width: 52px;
        margin-right: 9px;
        box-shadow: inset 0 0 0 1px #dce6f2, 3px 0 0 -1px #c3d0e0, 4px 0 0 -1px #4c5f78, 7px 0 0 -1px #b9c8da, 8px 0 0 -1px #4c5f78;
    }

    .task.current {
        background: linear-gradient(135deg, #f2f6fb, #d5e0ed 50%, #c8d6e8);
    }

    .task svg {
        width: 36px;
        height: 36px;
    }

    .tray {
        display: flex;
        align-items: center;
        gap: 9px;
        margin-left: auto;
        color: #fff;
    }

    .lang {
        font: 10px "Liberation Serif", serif;
    }

    .help {
        width: 16px;
        height: 16px;
    }

    .ime {
        width: 12px;
        height: 20px;
    }

    .wifi {
        width: 32px;
        height: 33px;
    }

    .chev {
        width: 8px;
        height: 8px;
    }

    .clock {
        display: flex;
        flex-direction: column;
        align-items: center;
        width: 66px;
        margin-left: 3px;
        line-height: 18px;
    }

    .peek {
        width: 15px;
        height: 38px;
        margin-left: -4px;
        border-left: 1px solid #4a5a70;
        background: linear-gradient(135deg, #5f6f84, #93a5bd);
        box-shadow: inset 1px 0 #a9b9cc;
    }
</style>
